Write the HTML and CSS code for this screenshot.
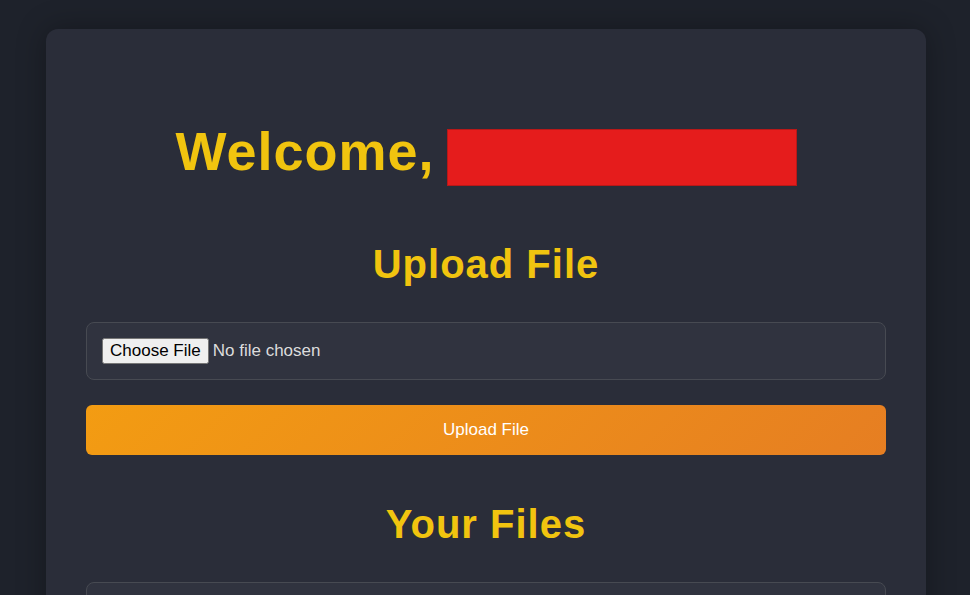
FILE: index.html
```html
<!DOCTYPE html>
<html lang="en">
<head>
<meta charset="utf-8">
<title>Dashboard</title>
<link rel="stylesheet" href="styles.css">
</head>
<body>
<main class="card">
  <h1 class="welcome">Welcome, <span class="name-redacted"></span></h1>
  <h2 class="section-title upload-title">Upload File</h2>
  <form class="upload-form">
    <div class="file-box">
      <input type="file" class="file-input">
    </div>
    <button type="button" class="upload-btn">Upload File</button>
  </form>
  <h2 class="section-title files-title">Your Files</h2>
  <div class="file-list"></div>
</main>
</body>
</html>
```
FILE: styles.css
```css
html, body {
  margin: 0;
  padding: 0;
}
body {
  background: #1e222b;
  font-family: "Liberation Sans", Arial, sans-serif;
  color: #e0e0e0;
  min-height: 100vh;
  overflow: hidden;
  padding-left: 2px;
}
.card {
  width: 800px;
  margin: 29px auto 0;
  padding: 40px;
  background: #2a2d39;
  border-radius: 12px;
  box-shadow: 0 0 30px rgba(0, 0, 0, 0.3);
  display: flex;
  flex-direction: column;
  min-height: 700px;
}
.welcome {
  margin: 50px 0 0;
  font-size: 54px;
  line-height: 64px;
  font-weight: bold;
  letter-spacing: 1px;
  color: #f1c40f;
  text-align: center;
}
.name-redacted {
  display: inline-block;
  width: 348px;
  height: 55px;
  background: #e51c1c;
  border: 1px solid #b81818;
  vertical-align: -16px;
  margin-left: -4px;
}
.section-title {
  margin: 0;
  font-size: 40px;
  line-height: 46px;
  font-weight: bold;
  letter-spacing: 1px;
  color: #f1c40f;
  text-align: center;
}
.upload-title {
  margin-top: 55px;
}
.upload-form {
  margin-top: 35px;
  display: flex;
  flex-direction: column;
  gap: 25px;
}
.file-box {
  padding: 15px;
  border: 1px solid #474a52;
  border-radius: 8px;
  background: #30333f;
  display: flex;
}
.file-input {
  font-family: "Liberation Sans", Arial, sans-serif;
  font-size: 17px;
  color: #dcdcdc;
}
.upload-btn {
  height: 50px;
  border: none;
  border-radius: 6px;
  background: linear-gradient(135deg, #f39c12, #e67e22);
  color: #ffffff;
  font-family: "Liberation Sans", Arial, sans-serif;
  font-size: 17px;
}
.files-title {
  margin-top: 46px;
}
.file-list {
  margin-top: 35px;
  height: 120px;
  border: 1px solid #474a52;
  border-radius: 8px;
  background: #30333f;
}
```
